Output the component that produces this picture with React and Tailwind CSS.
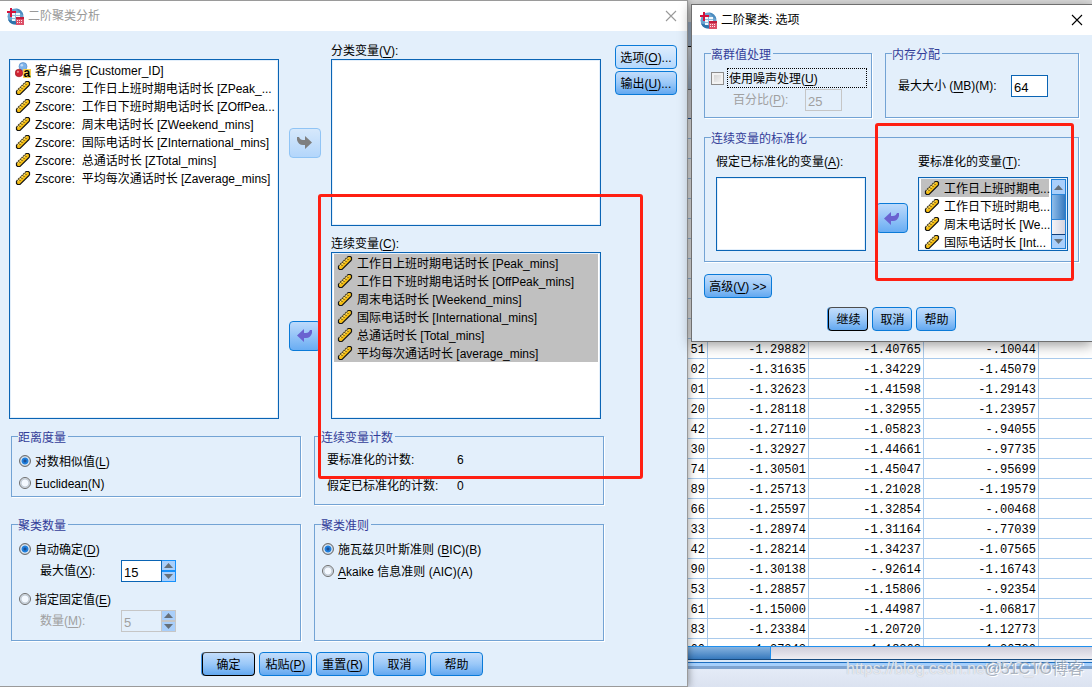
import clsx from 'clsx';

const sourceVars = [
  { kind: 'nominal', label: '客户编号 [Customer_ID]' },
  { kind: 'scale', label: 'Zscore:  工作日上班时期电话时长 [ZPeak_...' },
  { kind: 'scale', label: 'Zscore:  工作日下班时期电话时长 [ZOffPea...' },
  { kind: 'scale', label: 'Zscore:  周末电话时长 [ZWeekend_mins]' },
  { kind: 'scale', label: 'Zscore:  国际电话时长 [ZInternational_mins]' },
  { kind: 'scale', label: 'Zscore:  总通话时长 [ZTotal_mins]' },
  { kind: 'scale', label: 'Zscore:  平均每次通话时长 [Zaverage_mins]' },
];

const continuousVars = [
  { kind: 'scale', selected: true, label: '工作日上班时期电话时长 [Peak_mins]' },
  { kind: 'scale', selected: true, label: '工作日下班时期电话时长 [OffPeak_mins]' },
  { kind: 'scale', selected: true, label: '周末电话时长 [Weekend_mins]' },
  { kind: 'scale', selected: true, label: '国际电话时长 [International_mins]' },
  { kind: 'scale', selected: true, label: '总通话时长 [Total_mins]' },
  { kind: 'scale', selected: true, label: '平均每次通话时长 [average_mins]' },
];

const standardizeVars = [
  { kind: 'scale', selected: true, label: '工作日上班时期电...' },
  { kind: 'scale', label: '工作日下班时期电...' },
  { kind: 'scale', label: '周末电话时长 [We...' },
  { kind: 'scale', label: '国际电话时长 [Int...' },
];

// the first rows of the sheet lie under the options window
const coveredRows = Array.from({ length: 11 }, () => ['', '', '', '']);

const sheetRows = [
  ['51', '-1.29882', '-1.40765', '-.10044'],
  ['02', '-1.31635', '-1.34229', '-1.45079'],
  ['01', '-1.32623', '-1.41598', '-1.29143'],
  ['20', '-1.28118', '-1.32955', '-1.23957'],
  ['42', '-1.27110', '-1.05823', '-.94055'],
  ['30', '-1.32927', '-1.44661', '-.97735'],
  ['74', '-1.30501', '-1.45047', '-.95699'],
  ['89', '-1.25713', '-1.21028', '-1.19579'],
  ['66', '-1.25597', '-1.32854', '-.00468'],
  ['33', '-1.28974', '-1.31164', '-.77039'],
  ['42', '-1.28214', '-1.34237', '-1.07565'],
  ['90', '-1.30138', '-.92614', '-1.16743'],
  ['53', '-1.28857', '-1.15806', '-.92354'],
  ['61', '-1.15000', '-1.44987', '-1.06817'],
  ['83', '-1.23384', '-1.20720', '-1.12773'],
  ['60', '-1.27343', '-1.18362', '-1.20730'],
];

const AppIcon = () => (
  <svg width="17" height="17" viewBox="0 0 17 17" aria-hidden="true" className="shrink-0">
    <circle cx="8.5" cy="8.5" r="8" fill="#6ba3cf" />
    <path d="M1 11.5A8 8 0 0 0 9 16.500v-3z" fill="#2f74ab" />
    <path d="M9 .5a8 8 0 0 1 7.500 7L13 5z" fill="#4c8cbf" />
    <path d="M5 5h8v4H9v4H5z" fill="#f2f8fc" />
    <path d="M5 7.500h8M5 10.500h4M8.500 5v8" stroke="#8dbbdc" strokeWidth="1" />
    <path d="M3 0h2v3h4v2H5v4H3V5H0V3h3z" fill="#d3113b" />
    <rect x="9" y="9" width="8" height="8" fill="#dc5068" />
    <rect x="9" y="9" width="8" height="2" fill="#c01c3c" />
    <path d="M10 12.500h6M10 14.500h6" stroke="#ffe3e7" strokeWidth="1" strokeDasharray="1 1" />
  </svg>
);

const ScaleIcon = () => (
  <svg width="16" height="16" viewBox="0 0 16 16" aria-hidden="true" className="shrink-0">
    <path d="M11 1.500h2.500l1 1V5L5 14.500H2.500l-1-1V11z" fill="#f5bd12" />
    <path d="M11 1.500L1.500 11" stroke="#3a3a3a" strokeWidth="1.200" strokeDasharray="1.600 .8" />
    <path d="M11.500 2.800L2.800 11.500" stroke="#fdeb9a" strokeWidth=".9" />
    <path d="M14.500 5L5 14.500H2.500l-1-1V11M11 1.500h2.500l1 1V5" fill="none" stroke="#161616" strokeWidth="1.200" />
    <path d="M4 9.500l1.300 1.300M6 7.500l1.300 1.300M8 5.500l1.300 1.300M10 3.500l1.300 1.300" stroke="#2b2200" strokeWidth="1" />
  </svg>
);

const NominalIcon = () => (
  <svg width="16" height="16" viewBox="0 0 16 16" aria-hidden="true" className="shrink-0">
    <circle cx="8" cy="4.5" r="4" fill="#7db3ea" stroke="#4f86c4" strokeWidth=".6" />
    <circle cx="6.8" cy="3.2" r="1.3" fill="#c5defa" />
    <circle cx="4" cy="11" r="3.8" fill="#cf2433" stroke="#94121f" strokeWidth=".6" />
    <circle cx="2.9" cy="9.8" r="1.1" fill="#ee8b90" />
    <rect x="8" y="7" width="8" height="9" fill="#f5cf4e" />
    <text x="8.4" y="14.5" fontSize="12" fontWeight="bold" fontFamily="Liberation Sans, sans-serif">a</text>
  </svg>
);

const MoveArrow = ({ flipped }) => (
  <svg
    width="15"
    height="13"
    viewBox="0 0 15 13"
    aria-hidden="true"
    className={flipped ? '-scale-x-100 text-[#7f7f7f]' : 'text-[#6a62d0]'}
  >
    <path d="M0 6.5L7 0v4h2c2 0 3.200-1 4-3h2v3c-.8 3-3 5-6 5H7v4z" fill="currentColor" />
  </svg>
);

const CloseButton = ({ className }) => (
  <button type="button" aria-label="关闭" className={clsx('ml-auto flex size-4 items-center justify-center', className)}>
    <svg width="12" height="12" viewBox="0 0 12 12" aria-hidden="true">
      <path d="M1 1l10 10M11 1L1 11" stroke="currentColor" strokeWidth="1.1" />
    </svg>
  </button>
);

const Key = ({ children }) => <span className="underline underline-offset-2">{children}</span>;

const Button = ({ children, primary, light, className }) => (
  <button
    type="button"
    className={clsx(
      'h-6 shrink-0 whitespace-nowrap rounded-[4px] border bg-linear-to-b pt-0.5',
      primary ? 'border-black border-t-[#4d4d4d] shadow-[-1px_0_0_#3f94e6]' : 'border-[#0a7ad8]',
      light ? 'from-[#deedfd] to-[#b4d8fd]' : 'from-[#c3ddfb] via-[#9ac8f8] to-[#62a8f0]',
      className,
    )}
  >
    {children}
  </button>
);

const MoveButton = ({ flipped, label, className }) => (
  <button
    type="button"
    aria-label={label}
    className={clsx(
      'flex h-[30px] w-8 items-center justify-center rounded-[4px] border bg-linear-to-b',
      flipped
        ? 'border-[#90c4f5] from-[#d6e8fb] to-[#b3d6fb]'
        : 'border-[#0a7ad8] from-[#bddafb] to-[#69adf3]',
      className,
    )}
  >
    <MoveArrow flipped={flipped} />
  </button>
);

const VarList = ({ items, label, className, children }) => (
  <div
    className={clsx(
      'flex min-w-0 overflow-hidden border border-[#0a64b4] bg-white px-[2px] py-px shadow-[inset_0_0_0_1px_#e3effb]',
      className,
    )}
  >
    <ul role="listbox" aria-label={label} className="min-w-0 flex-1">
      {items.map((item) => (
        <li
          key={item.label}
          role="option"
          aria-selected={Boolean(item.selected)}
          className={clsx('flex h-[18px] items-center gap-1 pl-[3px]', item.selected && 'bg-[#c0c0c0]')}
        >
          {item.kind === 'nominal' ? <NominalIcon /> : <ScaleIcon />}
          <span className="pt-0.5 whitespace-pre">{item.label}</span>
        </li>
      ))}
    </ul>
    {children}
  </div>
);

const Group = ({ title, className, children }) => (
  <fieldset
    className={clsx('min-w-0 border border-[#73a3d4] px-[6px] shadow-[1px_1px_0_#fff]', className)}
  >
    <legend className="bg-[#e3effb] pt-1 pr-[2px] leading-4 text-[#333d99]">{title}</legend>
    {children}
  </fieldset>
);

const Radio = ({ name, checked, children }) => (
  <label className="flex h-[22px] items-center gap-1 pl-px">
    <input
      type="radio"
      name={name}
      defaultChecked={checked}
      className="size-3 appearance-none rounded-full border border-[#6e6e6e] bg-[radial-gradient(circle,#f4f9ff_0_3px,#b9c4cf_4px,#e8eef4_5px)] checked:bg-[radial-gradient(circle,#1b4f96_0_1px,#1f7fdc_2px_3px,#e9f2fb_4px,#a9b3bd_5px)]"
    />
    <span className="pt-0.5">{children}</span>
  </label>
);

const Triangle = ({ down }) => (
  <svg width="9" height="5" viewBox="0 0 9 5" aria-hidden="true" className={down ? 'rotate-180' : ''}>
    <path d="M4.500 0L9 5H0z" fill="#66707a" />
  </svg>
);

const SpinnerRow = ({ id, label, value, disabled }) => (
  <div className="flex h-[22px] items-center pl-[22px]">
    <label htmlFor={id} className={clsx('w-[81px]', disabled && 'text-[#a0a0a0]')}>
      {label}
    </label>
    <input
      id={id}
      type="text"
      defaultValue={value}
      disabled={disabled}
      className={clsx(
        'h-[22px] w-[41px] border px-[2px] pt-0.5 text-[13px]',
        disabled ? 'border-[#c6c6c6] text-[#a0a0a0]' : 'border-[#0a64b4] bg-white',
      )}
    />
    <div
      className={clsx(
        'flex h-[22px] w-[14px] flex-col border-y border-r',
        disabled ? 'border-[#c6c6c6]' : 'border-[#1791fb]',
      )}
    >
      <button
        type="button"
        aria-label="增加"
        disabled={disabled}
        className={clsx(
          'flex flex-1 items-center justify-center border-b-2 bg-[#a9cffb]',
          disabled ? 'border-[#c6c6c6]' : 'border-[#1791fb]',
        )}
      >
        <Triangle />
      </button>
      <button
        type="button"
        aria-label="减少"
        disabled={disabled}
        className="flex flex-1 items-center justify-center bg-[#a9cffb]"
      >
        <Triangle down />
      </button>
    </div>
  </div>
);

const ListScrollbar = () => (
  <div className="-mr-px ml-[2px] flex w-[15px] flex-col border border-[#1e7fd6] bg-[#f0f0f4]">
    <button type="button" aria-label="向上滚动" className="flex h-[14px] items-center justify-center bg-[#a9cffb]">
      <Triangle />
    </button>
    <div className="h-[26px] border-y border-[#2e86d8] bg-linear-to-r from-[#8fbdea] to-[#3579be]" />
    <div className="flex-1 bg-linear-to-r from-[#f4f3f7] to-[#d5d4df]" />
    <button
      type="button"
      aria-label="向下滚动"
      className="flex h-[14px] items-center justify-center border-t border-[#15407a] bg-[#a9cffb]"
    >
      <Triangle down />
    </button>
  </div>
);

const ClusterDialog = () => (
  <section className="relative z-10 w-[63%] shrink-0 border-t border-r border-b border-[#9a9a9a] bg-[#e3effb] shadow-[0_0_8px_rgba(0,0,0,0.45)]">
    <header className="flex h-[30px] items-center gap-1 bg-white pr-2 pl-[7px] text-[#999]">
      <AppIcon />
      <h1>二阶聚类分析</h1>
      <CloseButton className="text-[#999]" />
    </header>

    <div className="flex gap-[14px] pr-[10px] pl-[9px]">
      <div className="grid flex-1 grid-cols-[1fr_auto_1fr] grid-rows-[28px_167px_26px_167px] gap-x-[10px]">
        <VarList label="变量" items={sourceVars} className="row-span-3 row-start-2" />
        <MoveButton flipped label="移到分类变量" className="col-start-2 row-start-2 self-center" />
        <MoveButton label="移出连续变量" className="col-start-2 row-start-4 self-center" />
        <p className="col-start-3 row-start-1 self-end leading-4">
          分类变量(<Key>V</Key>):
        </p>
        <VarList label="分类变量" items={[]} className="col-start-3 row-start-2" />
        <p className="col-start-3 row-start-3 self-end leading-4">
          连续变量(<Key>C</Key>):
        </p>
        <VarList label="连续变量" items={continuousVars} className="col-start-3 row-start-4" />
      </div>
      <div className="flex w-[62px] flex-col gap-[2px] pt-[14px]">
        <Button light>
          选项(<Key>O</Key>)...
        </Button>
        <Button>
          输出(<Key>U</Key>)...
        </Button>
      </div>
    </div>

    <div className="mt-[7px] mr-[83px] ml-[11px] grid grid-cols-2 items-start gap-x-[13px] gap-y-[9px]">
      <Group title="距离度量" className="pt-1 pb-[2px]">
        <Radio name="distance" checked>
          对数相似值(<Key>L</Key>)
        </Radio>
        <Radio name="distance">
          Euclidea<Key>n</Key>(N)
        </Radio>
      </Group>

      <Group title="连续变量计数" className="pt-px pb-[5px]">
        <dl className="grid grid-cols-[130px_1fr] pl-[6px] leading-[26px]">
          <dt>要标准化的计数:</dt>
          <dd>6</dd>
          <dt>假定已标准化的计数:</dt>
          <dd>0</dd>
        </dl>
      </Group>

      <Group title="聚类数量" className="pt-1 pb-2">
        <Radio name="count" checked>
          自动确定(<Key>D</Key>)
        </Radio>
        <SpinnerRow
          id="max-clusters"
          value="15"
          label={
            <>
              最大值(<Key>X</Key>):
            </>
          }
        />
        <div className="mt-[6px]">
          <Radio name="count">
            指定固定值(<Key>E</Key>)
          </Radio>
        </div>
        <SpinnerRow
          id="fixed-clusters"
          value="5"
          disabled
          label={
            <>
              数量(<Key>M</Key>):
            </>
          }
        />
      </Group>

      <Group title="聚类准则" className="self-stretch pt-1">
        <Radio name="criterion" checked>
          施瓦兹贝叶斯准则 (<Key>B</Key>IC)(B)
        </Radio>
        <Radio name="criterion">
          <Key>A</Key>kaike 信息准则 (AIC)(A)
        </Radio>
      </Group>
    </div>

    <footer className="mt-[11px] flex justify-center gap-1 pr-[2px] pb-[10px]">
      <Button primary className="w-[53px]">
        确定
      </Button>
      <Button className="w-[53px]">
        粘贴(<Key>P</Key>)
      </Button>
      <Button className="w-[53px]">
        重置(<Key>R</Key>)
      </Button>
      <Button className="w-[53px]">取消</Button>
      <Button className="w-[53px]">帮助</Button>
    </footer>

    <div className="pointer-events-none absolute top-[193px] left-[318px] h-[285px] w-[325px] rounded-[3px] border-3 border-[#ff1f12]" />
  </section>
);

const OptionsDialog = () => (
  <section className="absolute top-1 right-0 left-[3px] z-20 border-t border-b border-l border-[#6f6f6f] bg-[#e3effb] shadow-[0_3px_12px_rgba(0,0,0,0.4)]">
    <header className="flex h-[30px] items-center gap-1 bg-white pr-[7px] pl-2">
      <AppIcon />
      <h2>二阶聚类: 选项</h2>
      <CloseButton />
    </header>

    <div className="pt-2 pr-[13px] pb-[10px] pl-3">
      <div className="grid grid-cols-[168fr_194fr] gap-[13px]">
        <Group title="离群值处理" className="pt-[5px] pr-1 pb-[6px]">
          <div className="flex h-5 items-center gap-[3px]">
            <input
              id="noise"
              type="checkbox"
              className="size-[13px] appearance-none border border-[#8c8c8c] bg-linear-to-br from-[#cfcfcf] to-[#f8f8f8] shadow-[inset_0_0_0_2px_#f2f2f2]"
            />
            <label htmlFor="noise" className="flex-1 border border-dotted border-black pt-0.5 pl-px leading-4">
              使用噪声处理(<Key>U</Key>)
            </label>
          </div>
          <div className="mt-px flex items-center pl-[22px] text-[#a0a0a0]">
            <label htmlFor="percent" className="w-[72px]">
              百分比(<Key>P</Key>):
            </label>
            <input
              id="percent"
              type="text"
              defaultValue="25"
              disabled
              className="h-[22px] w-[37px] border border-[#c6c6c6] px-[2px] pt-0.5 text-[13px]"
            />
          </div>
        </Group>

        <Group title="内存分配" className="pt-3">
          <div className="flex items-center pl-[6px]">
            <label htmlFor="memory" className="w-[113px]">
              最大大小 (<Key>M</Key>B)(M):
            </label>
            <input
              id="memory"
              type="text"
              defaultValue="64"
              className="h-[22px] w-[37px] border border-[#0a64b4] bg-white px-[2px] pt-0.5 text-[13px]"
            />
          </div>
        </Group>
      </div>

      <Group title="连续变量的标准化" className="mt-[9px] pt-[5px] pb-[10px]">
        <div className="grid grid-cols-[1fr_auto_1fr] grid-rows-[25px_74px] gap-x-[10px] pr-1 pl-[5px]">
          <p className="pt-0.5 leading-4">
            假定已标准化的变量(<Key>A</Key>):
          </p>
          <p className="col-start-3 pt-0.5 leading-4">
            要标准化的变量(<Key>T</Key>):
          </p>
          <VarList label="假定已标准化的变量" items={[]} className="row-start-2" />
          <MoveButton label="移到假定已标准化的变量" className="row-start-2 mb-[18px] self-end" />
          <VarList label="要标准化的变量" items={standardizeVars} className="row-start-2">
            <ListScrollbar />
          </VarList>
        </div>
      </Group>

      <Button className="mt-3 block w-[68px]">
        高级(<Key>V</Key>) &gt;&gt;
      </Button>

      <footer className="mt-[9px] flex justify-center gap-1 pl-[2px]">
        <Button primary className="w-10">
          继续
        </Button>
        <Button className="w-10">取消</Button>
        <Button className="w-10">帮助</Button>
      </footer>
    </div>

    <div className="pointer-events-none absolute top-[118px] right-[18px] h-[158px] w-[199px] rounded-[3px] border-3 border-[#ff1f12]" />
  </section>
);

const DataSheet = () => (
  <div className="flex h-full flex-col bg-white">
    <div className="h-[22px] shrink-0 bg-[#dcdcdc]" />
    <div className="h-[25px] shrink-0 border-b border-black bg-[#a9bdd4]" />
    <div className="h-[42px] shrink-0 bg-linear-to-b from-[#e4e8ee] to-[#a3b8cf]" />
    <div className="h-[30px] shrink-0 border-t border-b border-t-[#666] border-b-[#1b4f96] bg-[#e4e4e8]" />

    <div className="min-h-0 flex-1 overflow-hidden">
      <table className="w-full table-fixed border-separate border-spacing-0 font-['Liberation_Mono','Noto_Sans_CJK_SC',monospace] text-xs">
        <colgroup>
          <col className="w-5" />
          <col className="w-[101px]" />
          <col className="w-[115px]" />
          <col className="w-[115px]" />
          <col />
        </colgroup>
        <tbody>
          {[...coveredRows, ...sheetRows].map((row, i) => (
            <tr key={i}>
              {row.map((value, j) => (
                <td
                  key={j}
                  className="h-5 border-r border-b border-[#a9caec] pt-[3px] pr-[2px] text-right leading-4 whitespace-nowrap"
                >
                  {value}
                </td>
              ))}
              <td className="h-5 border-b border-[#a9caec]" />
            </tr>
          ))}
        </tbody>
      </table>
    </div>

    <div className="flex h-[14px] shrink-0 border-t border-b border-t-[#1f8fee] border-b-[#174a80] bg-linear-to-b from-[#cfcddb] to-[#efedf2]">
      <div className="w-[83px] border-r border-[#1f8fee] bg-linear-to-b from-[#86b3df] to-[#3679bd]" />
    </div>
    <div className="h-[3px] shrink-0 border-b border-[#1f6fc0] bg-[#dbe9f8]" />
    <div className="h-[6px] shrink-0 border-b-3 border-[#7ea3cf] bg-[#a6d0fc]" />
    <div className="h-[18px] shrink-0 bg-linear-to-b from-[#e4ebf7] to-[#dbe2f0]" />
  </div>
);

const Watermark = () => (
  <div className="pointer-events-none absolute right-2 bottom-[6px] z-10 text-base leading-6 whitespace-nowrap">
    <p className="absolute right-0 bottom-0 w-[238px] text-white/70 [text-shadow:0_0_1px_#a3abb8]">
      https://blog.csdn.net/JYC_W
    </p>
    <p className="relative text-[#8f98a6]/70 [text-shadow:1px_1px_0_#fff]">@51CTO博客</p>
  </div>
);

const App = () => (
  <main className="flex min-h-screen overflow-hidden bg-[#dfe6f3] font-['Liberation_Sans','Noto_Sans_CJK_SC',sans-serif] text-xs text-black">
    <ClusterDialog />
    <div className="relative min-w-0 flex-1">
      <div className="absolute inset-0">
        <DataSheet />
      </div>
      <OptionsDialog />
      <Watermark />
    </div>
  </main>
);

export default App;
